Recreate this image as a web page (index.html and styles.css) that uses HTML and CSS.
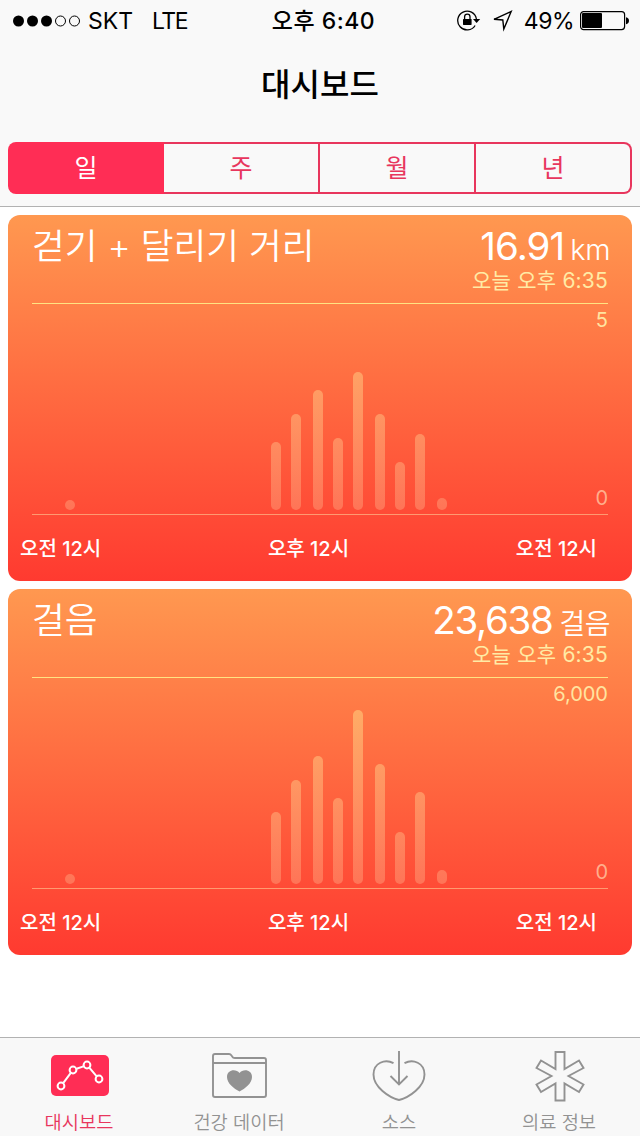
FILE: index.html
```html
<!DOCTYPE html>
<html lang="ko">
<head>
  <meta charset="UTF-8" />
  <meta name="viewport" content="width=device-width, initial-scale=1.0"/>
  <title>대시보드</title>
  <link rel="stylesheet" href="styles.css">
</head>
<body>

  <header class="header">
    <!-- Status bar -->
    <div class="status-bar">
      <div class="status-left">
        <svg class="signal" width="68" height="12" viewBox="0 0 68 12">
          <circle cx="5.5" cy="6" r="5.5"/>
          <circle cx="19.5" cy="6" r="5.5"/>
          <circle cx="33.5" cy="6" r="5.5"/>
          <circle class="empty" cx="47.5" cy="6" r="5"/>
          <circle class="empty" cx="61.5" cy="6" r="5"/>
        </svg>
        <span class="carrier">SKT</span>
        <span class="network">LTE</span>
      </div>
      <div class="clock">오후 6:40</div>
      <div class="status-right">
        <svg class="lock-icon" width="24" height="22" viewBox="0 0 24 22">
          <path d="M18.100 15.500A9.400 9.400 0 1 1 19.400 9" fill="none" stroke="#000" stroke-width="1.300"/>
          <path d="M16 9H23.200L19.600 13z"/>
          <rect x="6" y="8.900" width="8.600" height="6" rx=".6"/>
          <path d="M7.600 9.200V6.800a2.700 2.700 0 0 1 5.400 0V9.200" fill="none" stroke="#000" stroke-width="1.300"/>
        </svg>
        <svg class="location-icon" width="21" height="22" viewBox="0 0 21 22">
          <path d="M2 9.300L19.200 1.500L11.800 19L10.800 10z" fill="none" stroke="#000" stroke-width="1.400"/>
        </svg>
        <span class="percent">49%</span>
        <svg class="battery-icon" width="49" height="20" viewBox="0 0 49 20">
          <rect x=".6" y=".6" width="44" height="18" rx="3" fill="none" stroke="#000" stroke-width="1.2"/>
          <rect x="2" y="2" width="20" height="15" rx="1"/>
          <path d="M46 6.2c2 .3 3 1.600 3 3.500s-1 3.200-3 3.500z"/>
        </svg>
      </div>
    </div>

    <h1 class="page-title">대시보드</h1>

    <div class="segments">
      <button class="segment active">일</button>
      <button class="segment">주</button>
      <button class="segment">월</button>
      <button class="segment">년</button>
    </div>
  </header>

  <main class="cards">
    <section class="card">
      <div class="card-head">
        <h2 class="card-title">걷기 + 달리기 거리</h2>
        <div class="card-info">
          <p class="value distance">16.91<span class="unit">km</span></p>
          <p class="time">오늘 오후 6:35</p>
        </div>
      </div>
      <div class="plot">
        <svg class="bars" width="576" height="210" viewBox="0 0 576 210">
          <defs>
            <linearGradient id="bar-fill" gradientUnits="userSpaceOnUse" x1="0" y1="30" x2="0" y2="206">
              <stop offset="0" stop-color="#ffe68c" stop-opacity=".46"/>
              <stop offset="1" stop-color="#ffe6b4" stop-opacity=".26"/>
            </linearGradient>
          </defs>
          <g fill="url(#bar-fill)">
            <rect x="33" y="196" width="10" height="10" rx="5"/>
            <rect x="239" y="138" width="10" height="68" rx="5"/>
            <rect x="259" y="110" width="10" height="96" rx="5"/>
            <rect x="281" y="86" width="10" height="120" rx="5"/>
            <rect x="301" y="134" width="10" height="72" rx="5"/>
            <rect x="321" y="68" width="10" height="138" rx="5"/>
            <rect x="343" y="110" width="10" height="96" rx="5"/>
            <rect x="363" y="158" width="10" height="48" rx="5"/>
            <rect x="383" y="130" width="10" height="76" rx="5"/>
            <rect x="405" y="194" width="10" height="12" rx="5"/>
          </g>
        </svg>
        <div class="scale">
          <span class="max">5</span>
          <span class="min">0</span>
        </div>
      </div>
      <div class="hours"><span>오전 12시</span><span>오후 12시</span><span>오전 12시</span></div>
    </section>

    <section class="card">
      <div class="card-head">
        <h2 class="card-title">걸음</h2>
        <div class="card-info">
          <p class="value">23,638<span class="unit">걸음</span></p>
          <p class="time">오늘 오후 6:35</p>
        </div>
      </div>
      <div class="plot">
        <svg class="bars" width="576" height="210" viewBox="0 0 576 210">
          <g fill="url(#bar-fill)">
            <rect x="33" y="196" width="10" height="10" rx="5"/>
            <rect x="239" y="134" width="10" height="72" rx="5"/>
            <rect x="259" y="102" width="10" height="104" rx="5"/>
            <rect x="281" y="78" width="10" height="128" rx="5"/>
            <rect x="301" y="120" width="10" height="86" rx="5"/>
            <rect x="321" y="32" width="10" height="174" rx="5"/>
            <rect x="343" y="86" width="10" height="120" rx="5"/>
            <rect x="363" y="154" width="10" height="52" rx="5"/>
            <rect x="383" y="114" width="10" height="92" rx="5"/>
            <rect x="405" y="192" width="10" height="14" rx="5"/>
          </g>
        </svg>
        <div class="scale">
          <span class="max">6,000</span>
          <span class="min">0</span>
        </div>
      </div>
      <div class="hours"><span>오전 12시</span><span>오후 12시</span><span>오전 12시</span></div>
    </section>
  </main>

  <!-- Tab bar -->
  <nav class="tab-bar">
    <a class="tab active">
      <svg width="60" height="54" viewBox="0 0 60 54">
        <rect x="1" y="7" width="58" height="41" rx="5" fill="#ff2d55"/>
        <g fill="none" stroke="#fff" stroke-width="2">
          <path d="M13.200 35.200L20.800 24.800M26.600 20.800L33.400 18.400M39.300 19.700L46.700 28.300"/>
          <circle cx="11" cy="38" r="3.400"/>
          <circle cx="23" cy="22" r="3.400"/>
          <circle cx="37" cy="17" r="3.400"/>
          <circle cx="49" cy="31" r="3.400"/>
        </g>
      </svg>
      <span>대시보드</span>
    </a>
    <a class="tab">
      <svg width="60" height="54" viewBox="0 0 60 54">
        <path d="M3 47V8Q3 6 5 6H19Q20.500 6 21.500 7.500L23 9.500Q23.700 10 25 10H54Q56 10 56 12V47Q56 49 54 49H5Q3 49 3 47ZM3 15H56" fill="none" stroke="#929292" stroke-width="1.900"/>
        <path d="M29.500 43.500C24 40.500 17 35.500 17 29C17 21.500 26 20.500 29.500 25C33 20.500 42 21.500 42 29C42 35.500 35 40.500 29.500 43.500Z" fill="#929292"/>
      </svg>
      <span>건강 데이터</span>
    </a>
    <a class="tab">
      <svg width="60" height="54" viewBox="0 0 60 54">
        <g fill="none" stroke="#929292" stroke-width="1.900">
          <path d="M23.500 15.200C15 10.500 3.500 15 3.500 26.500C3.500 39 19 49.500 29 52C39 49.500 54.500 39 54.500 26.500C54.500 15 43 10.500 34.500 15.200"/>
          <path d="M29 3V36M20.500 28L29 36.500L37.500 28"/>
        </g>
      </svg>
      <span>소스</span>
    </a>
    <a class="tab">
      <svg width="60" height="54" viewBox="0 0 60 54">
        <path d="M25.500 4H34.500V21L49 12.500L53.500 20L38.500 28L53.500 36.500L49 44L34.500 35.500V52.500H25.500V35.500L11 44L6.500 36.500L21.500 28L6.500 20L11 12.500L25.500 21Z" fill="none" stroke="#929292" stroke-width="1.900"/>
      </svg>
      <span>의료 정보</span>
    </a>
  </nav>

</body>
</html>
```

FILE: styles.css
```css
* {
  box-sizing: border-box;
}

html, body {
  height: 100%;
  margin: 0;
  padding: 0;
}

body {
  display: flex;
  flex-direction: column;
  font-family: Inter, "Noto Sans CJK KR", sans-serif;
  background-color: #fff;
  color: #000;
  overflow: hidden;
}

h1, h2, p {
  margin: 0;
}

.header {
  height: 207px;
  flex: none;
  background-color: #f9f9f9;
  border-bottom: 1px solid #b2b2b2;
}

/* Status bar */
.status-bar {
  display: grid;
  grid-template-columns: 1fr auto 1fr;
  height: 40px;
  padding: 0 11px 0 13px;
  font-size: 23px;
  line-height: 42px;
}

.status-left, .status-right {
  display: flex;
  align-items: center;
}

.status-right {
  justify-content: flex-end;
}

.signal .empty {
  fill: none;
  stroke: #000;
}

.carrier {
  margin-left: 7px;
}

.network {
  margin-left: 19px;
  letter-spacing: -1.5px;
}

.clock {
  padding-left: 5px;
  font-weight: 500;
  letter-spacing: 0.5px;
}

.location-icon {
  margin: 0 11px 0 11px;
}

.percent {
  letter-spacing: -0.5px;
}

.battery-icon {
  margin-left: 6px;
}

.page-title {
  height: 102px;
  font-size: 32px;
  font-weight: 500;
  line-height: 89px;
  text-align: center;
}

/* Day / week / month / year */
.segments {
  display: flex;
  height: 52px;
  margin: 0 8px;
}

.segment {
  width: 156px;
  padding: 0;
  border: 2px solid #e8365d;
  border-left: none;
  background: none;
  color: #e8365d;
  font-family: inherit;
  font-size: 25px;
  line-height: 48px;
}

.segment.active {
  border: none;
  border-radius: 8px 0 0 8px;
  background-color: #ff2d55;
  color: #fff;
}

.segment:last-child {
  border-radius: 0 8px 8px 0;
}

/* Cards */
.cards {
  flex: 1;
  display: flex;
  flex-direction: column;
  gap: 8px;
  padding: 8px;
}

.card {
  flex: none;
  height: 366px;
  border-radius: 12px;
  background: linear-gradient(#ff9850, #ff3a30);
  color: #fff;
}

.card-head {
  display: flex;
  justify-content: space-between;
  height: 88px;
  padding: 0 24px;
}

.card-title {
  font-size: 35.6px;
  font-weight: 350;
  line-height: 64px;
}

.card-info {
  text-align: right;
}

.value {
  height: 54px;
  margin-right: -2px;
  font-size: 38.5px;
  font-weight: 400;
  line-height: 62px;
  letter-spacing: -1.3px;
}

.unit {
  margin-left: 7px;
  font-size: 28px;
  font-weight: 350;
  letter-spacing: -0.5px;
}

.value.distance {
  letter-spacing: -0.9px;
}

.distance .unit {
  margin-left: 6px;
  font-size: 29px;
}

.time {
  color: #ffeba5;
  font-size: 21px;
  line-height: 24px;
  letter-spacing: 0.2px;
}

.plot {
  display: grid;
  height: 212px;
  margin: 0 24px;
  border-top: 1px solid #ffe382;
  border-bottom: 1px solid #ff9a70;
}

.bars, .scale {
  grid-area: 1 / 1;
}

.scale {
  display: flex;
  flex-direction: column;
  justify-content: space-between;
  padding: 4px 0;
  text-align: right;
  font-size: 20px;
  line-height: 24px;
}

.max {
  color: #ffe4a0;
}

.min {
  color: #ffae8c;
}

.hours {
  display: flex;
  justify-content: space-between;
  padding: 0 35px 0 12px;
  font-size: 20px;
  font-weight: 500;
  line-height: 69px;
}

/* Tab bar */
.tab-bar {
  display: flex;
  flex: none;
  height: 99px;
  border-top: 1px solid #b2b2b2;
  background-color: #f8f8f8;
}

.tab {
  flex: 1;
  display: flex;
  flex-direction: column;
  align-items: center;
  padding-top: 10px;
  color: #929292;
  font-size: 18.7px;
  font-weight: 350;
  line-height: 42px;
}

.tab svg {
  flex: none;
}

.tab span {
  margin-right: 2px;
}

.tab.active {
  color: #e8365d;
}
```
